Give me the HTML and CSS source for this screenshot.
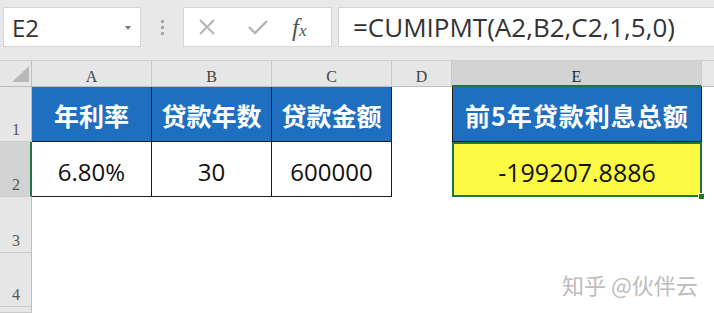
FILE: index.html
```html
<!DOCTYPE html>
<html lang="zh-CN">
<head>
<meta charset="utf-8">
<title>CUMIPMT</title>
<link rel="stylesheet" href="styles.css">
</head>
<body>
<div class="app">
  <div class="toolbar">
    <div class="namebox"><span class="ref">E2</span><span class="caret"></span></div>
    <div class="grip"><i></i><i></i><i></i></div>
    <div class="btns">
      <svg class="ico" width="20" height="20" viewBox="0 0 20 20"><path d="M3 3 L17 17 M17 3 L3 17" stroke="#b4b4b4" stroke-width="2" fill="none"/></svg>
      <svg class="ico" width="24" height="20" viewBox="0 0 24 20"><path d="M3 10 L9 16 L21 4" stroke="#b4b4b4" stroke-width="2.4" fill="none"/></svg>
      <span class="fx"><span class="f">f</span><span class="x">x</span></span>
    </div>
    <div class="formula">=CUMIPMT(A2,B2,C2,1,5,0)</div>
  </div>
  <div class="sheet">
    <div class="ch corner"><span class="tri"></span></div>
    <div class="ch">A</div>
    <div class="ch">B</div>
    <div class="ch">C</div>
    <div class="ch">D</div>
    <div class="ch sel">E</div>
    <div class="ch rest"></div>

    <div class="rh">1</div>
    <div class="cell head bx">年利率</div>
    <div class="cell head bx">贷款年数</div>
    <div class="cell head bx">贷款金额</div>
    <div class="cell"></div>
    <div class="cell head bx ehead">前5年贷款利息总额</div>
    <div class="cell"></div>

    <div class="rh sel">2</div>
    <div class="cell val bx">6.80%</div>
    <div class="cell val bx">30</div>
    <div class="cell val bx">600000</div>
    <div class="cell"></div>
    <div class="cell val result">-199207.8886<span class="handle"></span></div>
    <div class="cell"></div>

    <div class="rh">3</div>
    <div class="cell"></div><div class="cell"></div><div class="cell"></div><div class="cell"></div><div class="cell"></div><div class="cell"></div>

    <div class="rh">4</div>
    <div class="cell"></div><div class="cell"></div><div class="cell"></div><div class="cell"></div><div class="cell"></div><div class="cell"></div>

    <div class="rh last"></div>
    <div class="cell"></div><div class="cell"></div><div class="cell"></div><div class="cell"></div><div class="cell"></div><div class="cell"></div>
  </div>
  <div class="watermark">知乎 @伙伴云</div>
</div>
</body>
</html>
```
FILE: styles.css
```css
* { box-sizing: border-box; }
html, body { margin: 0; padding: 0; }
body {
  width: 714px;
  height: 313px;
  overflow: hidden;
  background: #ffffff;
  font-family: "Open Sans", "Noto Sans CJK SC", sans-serif;
}
.app {
  position: relative;
  width: 714px;
  height: 313px;
  overflow: hidden;
  display: flex;
  flex-direction: column;
}
.toolbar {
  height: 60px;
  flex: none;
  background: #e8e8e8;
  display: flex;
  align-items: flex-start;
  padding: 7px 0 0 3px;
}
.namebox {
  width: 138px;
  height: 40px;
  background: #fff;
  border: 1px solid #d6d6d6;
  display: flex;
  align-items: center;
  justify-content: space-between;
  padding: 0 9px 0 8px;
  color: #333;
  font-size: 24px;
}
.namebox .ref { line-height: 1; margin-top: 2px; }
.caret {
  width: 0;
  height: 0;
  border-left: 3px solid transparent;
  border-right: 3px solid transparent;
  border-top: 4px solid #7a7a7a;
  margin-top: 2px;
}
.grip {
  width: 42px;
  height: 40px;
  display: flex;
  flex-direction: column;
  align-items: center;
  justify-content: center;
  gap: 3px;
}
.grip i {
  display: block;
  width: 3px;
  height: 3px;
  background: #a8a8a8;
}
.btns {
  width: 149px;
  height: 40px;
  background: #fff;
  border: 1px solid #d6d6d6;
  display: flex;
  align-items: center;
  padding-left: 13px;
}
.btns .ico { display: block; }
.btns .ico:first-child { margin-right: 29px; }
.btns .ico:nth-child(2) { margin-right: 22px; }
.fx {
  font-family: "Liberation Serif", serif;
  font-style: italic;
  color: #555;
  display: flex;
  align-items: baseline;
}
.fx .f { font-size: 25px; line-height: 1; }
.fx .x { font-size: 17px; line-height: 1; }
.formula {
  flex: 1;
  margin-left: 6px;
  margin-right: -4px;
  height: 40px;
  background: #fff;
  border: 1px solid #d6d6d6;
  padding-left: 14px;
  font-size: 26px;
  line-height: 38px;
  color: #333;
  white-space: nowrap;
}
.sheet {
  flex: 1;
  display: grid;
  grid-template-columns: 32px 120px 120px 120px 60px 250px 1fr;
  grid-template-rows: 27px 55px 55px 56px 54px 1fr;
}
.ch {
  background: #e6e6e6;
  border-top: 1px solid #d0d0d0;
  border-right: 1px solid #cacaca;
  border-bottom: 1px solid #bdbdbd;
  font-family: "Liberation Serif", serif;
  font-size: 16px;
  color: #444;
  display: flex;
  align-items: center;
  justify-content: center;
  padding-top: 7px;
}
.ch.sel {
  background: #d3d3d3;
  border-bottom: 2px solid #217346;
  color: #262626;
}
.ch.rest { background: #e8e8e8; border-right: none; }
.corner { position: relative; border-right: 1px solid #bdbdbd; }
.tri {
  position: absolute;
  right: 2px;
  bottom: 4px;
  width: 0;
  height: 0;
  border-left: 17px solid transparent;
  border-bottom: 16px solid #b8b8b8;
}
.rh {
  background: #e6e6e6;
  border-right: 1px solid #bdbdbd;
  border-bottom: 1px solid #cacaca;
  font-family: "Liberation Serif", serif;
  font-size: 16px;
  color: #555;
  display: flex;
  align-items: flex-end;
  padding: 0 0 2px 12px;
}
.rh.sel {
  background: #d3d3d3;
  border-right: 2px solid #217346;
}
.cell {
  background: #fff;
  display: flex;
  align-items: center;
  justify-content: center;
  white-space: nowrap;
}
.bx {
  border-right: 1px solid #1a1a1a;
  border-bottom: 1px solid #1a1a1a;
}
.head {
  background: #1f6fc0;
  color: #fff;
  font-family: "Noto Sans CJK SC", sans-serif;
  font-weight: 700;
  font-size: 25px;
  padding-top: 2px;
}
.ehead {
  border-left: 1px solid #1a1a1a;
  letter-spacing: 1px;
}
.val {
  font-size: 24px;
  color: #111;
  padding-top: 4px;
}
.result {
  position: relative;
  background: #fcfa45;
  border: 2px solid #217346;
  font-size: 25px;
}
.handle {
  position: absolute;
  right: -5px;
  bottom: -5px;
  width: 7px;
  height: 7px;
  background: #217346;
  border: 1px solid #fff;
}
.watermark {
  position: absolute;
  left: 562px;
  top: 268px;
  font-family: "Noto Sans CJK SC", sans-serif;
  font-size: 22px;
  color: #bcbcbc;
  white-space: nowrap;
}
```
